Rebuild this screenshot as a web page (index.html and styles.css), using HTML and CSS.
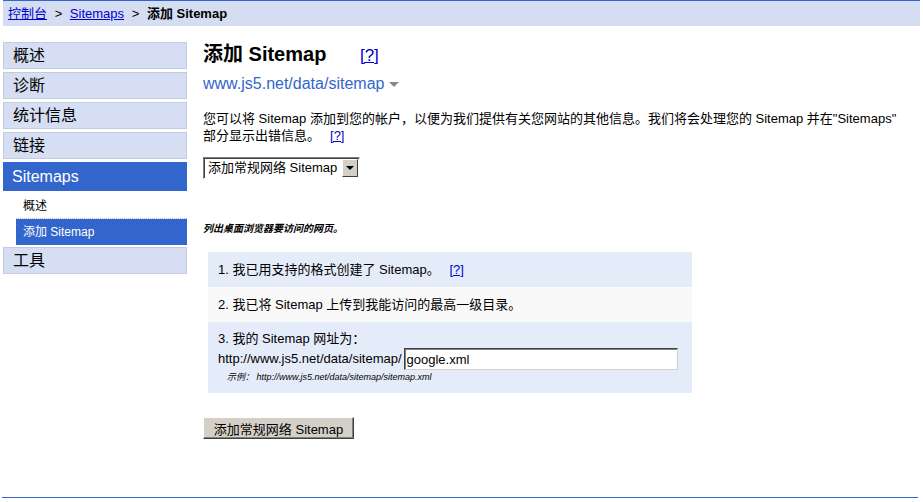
FILE: index.html
```html
<!DOCTYPE html>
<html lang="zh-CN">
<head>
    <meta charset="UTF-8">
    <title>添加 Sitemap</title>
    <link rel="stylesheet" href="styles.css">
</head>
<body>
    <div class="crumbs">
        <a href="#">控制台</a> <span class="sep">&gt;</span> <a href="#">Sitemaps</a> <span class="sep">&gt;</span> <b>添加 Sitemap</b>
    </div>

    <div class="page">
        <!-- left navigation -->
        <ul class="nav">
            <li class="nav-item">概述</li>
            <li class="nav-item">诊断</li>
            <li class="nav-item">统计信息</li>
            <li class="nav-item">链接</li>
            <li class="nav-item active">Sitemaps</li>
            <li class="sub-item">概述</li>
            <li class="sub-item current">添加 Sitemap</li>
            <li class="nav-item">工具</li>
        </ul>

        <div class="main">
            <h1 class="title">添加 Sitemap <a href="#" class="help big">[?]</a></h1>
            <div class="site">www.js5.net/data/sitemap <span class="arrow"></span></div>

            <p class="intro">您可以将 Sitemap 添加到您的帐户，以便为我们提供有关您网站的其他信息。我们将会处理您的 Sitemap 并在"Sitemaps" 部分显示出错信息。<a href="#" class="help">[?]</a></p>

            <div class="select-box">
                <span class="select-value">添加常规网络 Sitemap</span>
                <span class="select-btn"><span class="select-tri"></span></span>
            </div>

            <p class="note">列出桌面浏览器要访问的网页。</p>

            <div class="steps">
                <div class="step">1. 我已用支持的格式创建了 Sitemap。 <a href="#" class="help">[?]</a></div>
                <div class="step alt">2. 我已将 Sitemap 上传到我能访问的最高一级目录。</div>
                <div class="step last">
                    <div>3. 我的 Sitemap 网址为：</div>
                    <div class="url-row">
                        <span>http://www.js5.net/data/sitemap/</span>
                        <input type="text" class="url-input" value="google.xml">
                    </div>
                    <div class="example">示例： http://www.js5.net/data/sitemap/sitemap.xml</div>
                </div>
            </div>

            <button type="button" class="submit">添加常规网络 Sitemap</button>
        </div>
    </div>

    <div class="footer-line"></div>
</body>
</html>
```

FILE: styles.css
```css
body {
    margin: 0;
    font-family: "Liberation Sans", Arial, "Noto Sans CJK SC", sans-serif;
    font-size: 13px;
    color: #000;
    background: #fff;
}

a {
    color: #0000cc;
}

.crumbs {
    margin: 0 3px;
    height: 25px;
    border-top: 1px solid #3366cc;
    background-color: #d5ddf3;
    padding-left: 5px;
    line-height: 25px;
    font-size: 13px;
}

.crumbs .sep {
    margin: 0 4px;
}

.page {
    display: flex;
    padding-top: 16px;
}

.nav {
    list-style: none;
    margin: 0 0 0 3px;
    padding: 0;
    width: 184px;
    flex-shrink: 0;
}

.nav-item {
    box-sizing: border-box;
    height: 27px;
    margin-bottom: 3px;
    padding-left: 9px;
    background-color: #d5def2;
    border: 1px solid #c3cbe0;
    font-size: 16px;
    line-height: 25px;
}

.nav-item.active {
    height: 29px;
    line-height: 29px;
    background-color: #3366cc;
    border: none;
    color: #fff;
}

.sub-item {
    height: 24px;
    line-height: 24px;
    margin-left: 13px;
    padding-left: 7px;
    font-size: 12px;
    border-bottom: 1px dotted #a9bde8;
}

.sub-item.current {
    height: 26px;
    line-height: 26px;
    background-color: #3366cc;
    color: #fff;
    border-bottom: none;
    margin-bottom: 2px;
}

.main {
    margin-left: 16px;
    width: 702px;
}

.title {
    margin: 0;
    font-size: 20px;
    line-height: 24px;
    font-weight: bold;
}

.help {
    font-weight: normal;
    font-size: 13px;
    margin-left: 6px;
}

.help.big {
    font-size: 17px;
    margin-left: 28px;
}

.intro .help {
    display: inline-block;
    line-height: 15px;
    margin-left: 10px;
}

.site {
    margin-top: 6px;
    font-size: 16px;
    color: #3366cc;
    line-height: 20px;
}

.arrow {
    display: inline-block;
    width: 0;
    height: 0;
    border-left: 5px solid transparent;
    border-right: 5px solid transparent;
    border-top: 5px solid #888;
    vertical-align: middle;
}

.intro {
    margin: 16px 0 0;
    line-height: 17px;
    font-size: 13px;
}

.select-box {
    display: inline-flex;
    margin-top: 13px;
    height: 22px;
    width: 157px;
    box-sizing: border-box;
    border: 1px solid;
    border-color: #808080 #fff #fff #808080;
    box-shadow: inset 1px 1px 0 #404040;
    background: #fff;
}

.select-value {
    flex: 1;
    padding-left: 4px;
    line-height: 19px;
    font-size: 13px;
}

.select-btn {
    width: 16px;
    margin: 1px;
    box-sizing: border-box;
    background-color: #d4d0c8;
    border: 1px solid;
    border-color: #fff #404040 #404040 #fff;
    display: flex;
    align-items: center;
    justify-content: center;
}

.select-tri {
    width: 0;
    height: 0;
    border-left: 4px solid transparent;
    border-right: 4px solid transparent;
    border-top: 4px solid #000;
}

.note {
    margin: 41px 0 0;
    font-size: 10px;
    font-style: italic;
    font-weight: bold;
}

.steps {
    margin: 17px 0 0 5px;
    width: 484px;
}

.step {
    height: 35px;
    line-height: 35px;
    padding-left: 10px;
    background-color: #e5ecf9;
}

.step.alt {
    background-color: #f9f9f9;
}

.step.last {
    height: auto;
    line-height: 18px;
    padding-top: 8px;
    padding-bottom: 9px;
}

.url-row {
    display: flex;
    align-items: center;
    gap: 2px;
}

.url-input {
    width: 274px;
    height: 22px;
    box-sizing: border-box;
    padding: 1px 2px;
    font-family: "Liberation Sans", Arial, sans-serif;
    font-size: 13px;
    border: 1px solid;
    border-color: #404040 #d4d0c8 #d4d0c8 #404040;
    box-shadow: inset 1px 1px 0 #808080;
}

.example {
    margin-left: 9px;
    font-size: 9px;
    font-style: italic;
    line-height: 14px;
}

.submit {
    margin-top: 24px;
    width: 151px;
    height: 22px;
    padding: 0;
    font-family: "Liberation Sans", Arial, "Noto Sans CJK SC", sans-serif;
    font-size: 13px;
    background-color: #d4d0c8;
    border: 1px solid;
    border-color: #fff #404040 #404040 #fff;
    box-shadow: inset -1px -1px 0 #808080;
    color: #000;
}

.footer-line {
    position: absolute;
    top: 497px;
    left: 2px;
    width: 916px;
    height: 1px;
    background-color: #3366cc;
}
```
